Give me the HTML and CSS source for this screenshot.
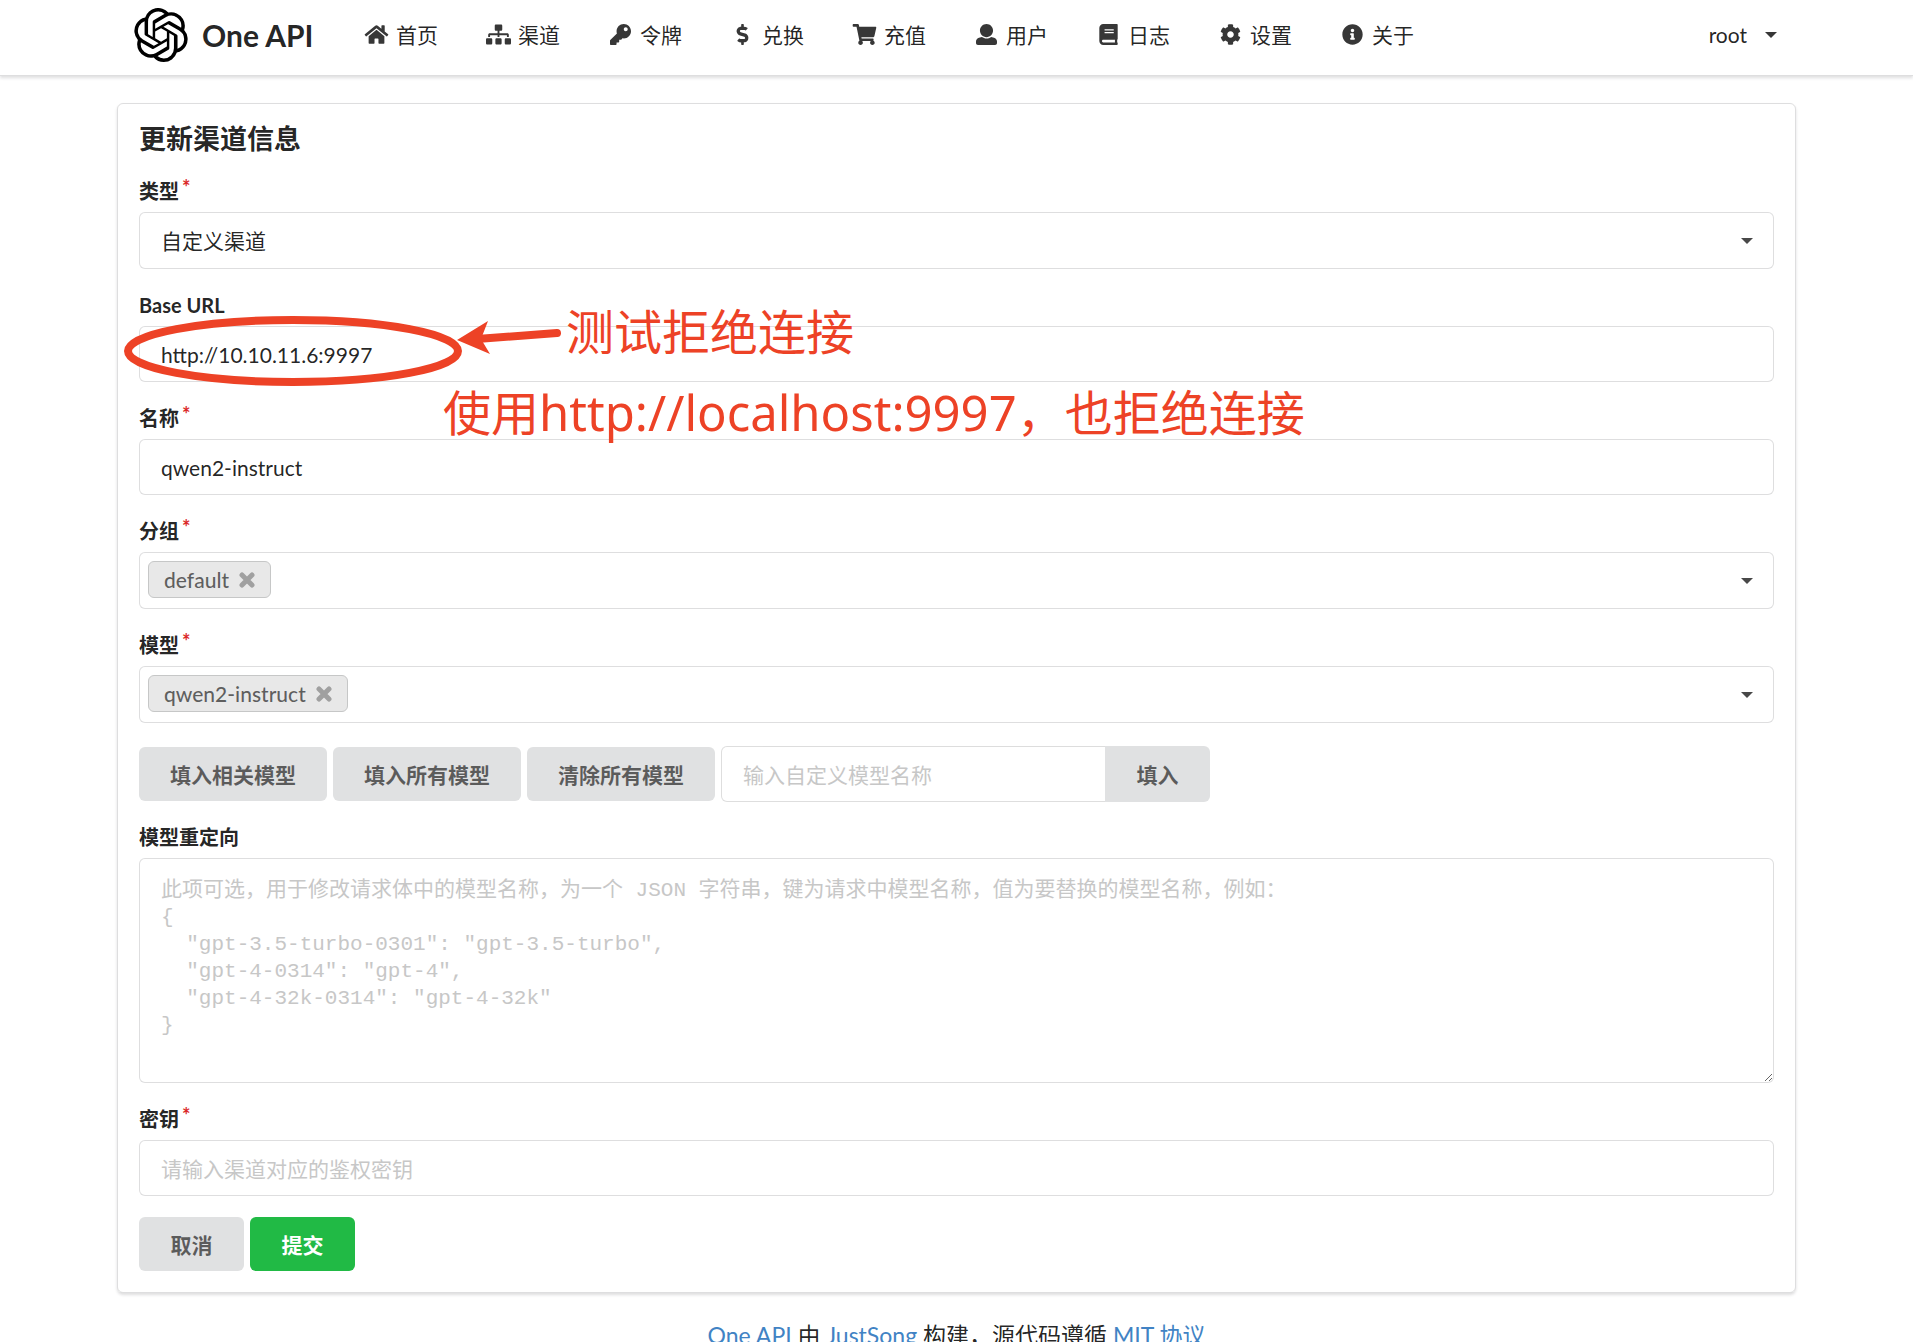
FILE: index.html
```html
<!DOCTYPE html>
<html lang="zh-CN">
<head>
    <meta charset="utf-8">
    <meta name="viewport" content="width=device-width, initial-scale=1">
    <title>One API</title>
    <link rel="stylesheet" href="styles.css">
</head>
<body>
    <header class="navbar">
        <nav class="container navbar-inner">
            <a class="brand" href="/">
                <svg class="logo" viewBox="0 0 24 24"><path d="M22.2819 9.8211a5.9847 5.9847 0 0 0-.5157-4.9108 6.0462 6.0462 0 0 0-6.5098-2.9A6.0651 6.0651 0 0 0 4.9807 4.1818a5.9847 5.9847 0 0 0-3.9977 2.9 6.0462 6.0462 0 0 0 .7427 7.0966 5.98 5.98 0 0 0 .511 4.9107 6.051 6.051 0 0 0 6.5146 2.9001A5.9847 5.9847 0 0 0 13.2599 24a6.0557 6.0557 0 0 0 5.7718-4.2058 5.9894 5.9894 0 0 0 3.9977-2.9001 6.0557 6.0557 0 0 0-.7475-7.0729zm-9.022 12.6081a4.4755 4.4755 0 0 1-2.8764-1.0408l.1419-.0804 4.7783-2.7582a.7948.7948 0 0 0 .3927-.6813v-6.7369l2.02 1.1686a.071.071 0 0 1 .038.052v5.5826a4.504 4.504 0 0 1-4.4945 4.4944zm-9.6607-4.1254a4.4708 4.4708 0 0 1-.5346-3.0137l.142.0852 4.783 2.7582a.7712.7712 0 0 0 .7806 0l5.8428-3.3685v2.3324a.0804.0804 0 0 1-.0332.0615L9.74 19.9502a4.4992 4.4992 0 0 1-6.1408-1.6464zM2.3408 7.8956a4.485 4.485 0 0 1 2.3655-1.9728V11.6a.7664.7664 0 0 0 .3879.6765l5.8144 3.3543-2.0201 1.1685a.0757.0757 0 0 1-.071 0l-4.8303-2.7865A4.504 4.504 0 0 1 2.3408 7.872zm16.5963 3.8558L13.1038 8.364 15.1192 7.2a.0757.0757 0 0 1 .071 0l4.8303 2.7913a4.4944 4.4944 0 0 1-.6765 8.1042v-5.6772a.79.79 0 0 0-.407-.667zm2.0107-3.0231l-.142-.0852-4.7735-2.7818a.7759.7759 0 0 0-.7854 0L9.409 9.2297V6.8974a.0662.0662 0 0 1 .0284-.0615l4.8303-2.7866a4.4992 4.4992 0 0 1 6.6802 4.66zM8.3065 12.863l-2.02-1.1638a.0804.0804 0 0 1-.038-.0567V6.0742a4.4992 4.4992 0 0 1 7.3757-3.4537l-.142.0805L8.704 5.459a.7948.7948 0 0 0-.3927.6813zm1.0976-2.3654l2.602-1.4998 2.6069 1.4998v2.9994l-2.5974 1.4997-2.6067-1.4997Z"/></svg>
                <span class="brand-name">One API</span>
            </a>
            <a class="nav-item" href="/">
                <svg class="icon" viewBox="0 0 576 512"><path d="M280.37 148.26L96 300.11V464a16 16 0 0 0 16 16l112.06-.29a16 16 0 0 0 15.92-16V368a16 16 0 0 1 16-16h64a16 16 0 0 1 16 16v95.64a16 16 0 0 0 16 16.05L464 480a16 16 0 0 0 16-16V300L295.67 148.26a12.19 12.19 0 0 0-15.3 0zM571.6 251.47L488 182.56V44.05a12 12 0 0 0-12-12h-56a12 12 0 0 0-12 12v72.61L318.47 43a48 48 0 0 0-61 0L4.34 251.47a12 12 0 0 0-1.6 16.9l25.5 31A12 12 0 0 0 45.15 301l235.22-193.74a12.19 12.19 0 0 1 15.3 0L530.9 301a12 12 0 0 0 16.9-1.6l25.5-31a12 12 0 0 0-1.7-16.93z"/></svg>
                <span>首页</span>
            </a>
            <a class="nav-item" href="/channel">
                <svg class="icon" viewBox="0 0 640 512"><path d="M128 352H32c-17.67 0-32 14.33-32 32v96c0 17.67 14.33 32 32 32h96c17.67 0 32-14.33 32-32v-96c0-17.67-14.33-32-32-32zm-24-80h192v48h48v-48h192v48h48v-57.59c0-21.17-17.23-38.41-38.41-38.41H344v-64h40c17.67 0 32-14.33 32-32V32c0-17.67-14.33-32-32-32H256c-17.67 0-32 14.33-32 32v96c0 17.67 14.33 32 32 32h40v64H94.41C73.23 224 56 241.23 56 262.41V320h48v-48zm264 80h-96c-17.67 0-32 14.33-32 32v96c0 17.67 14.33 32 32 32h96c17.67 0 32-14.33 32-32v-96c0-17.67-14.33-32-32-32zm240 0h-96c-17.67 0-32 14.33-32 32v96c0 17.67 14.33 32 32 32h96c17.67 0 32-14.33 32-32v-96c0-17.67-14.33-32-32-32z"/></svg>
                <span>渠道</span>
            </a>
            <a class="nav-item" href="/token">
                <svg class="icon" viewBox="0 0 512 512"><path d="M512 176.001C512 273.203 433.202 352 336 352c-11.22 0-22.19-1.062-32.827-3.069l-24.012 27.014A23.999 23.999 0 0 1 261.223 384H224v40c0 13.255-10.745 24-24 24h-40v40c0 13.255-10.745 24-24 24H24c-13.255 0-24-10.745-24-24v-78.059c0-6.365 2.529-12.47 7.029-16.971l161.802-161.802C163.108 213.814 160 195.271 160 176 160 78.798 238.797.001 335.999 0 433.488-.001 512 78.511 512 176.001zM336 128c0 26.51 21.49 48 48 48s48-21.49 48-48-21.49-48-48-48-48 21.49-48 48z"/></svg>
                <span>令牌</span>
            </a>
            <a class="nav-item" href="/redemption">
                <svg class="icon" viewBox="0 0 288 512"><path d="M209.2 233.4l-108-31.6C88.7 198.2 80 186.5 80 173.5c0-16.3 13.2-29.5 29.5-29.5h66.3c12.2 0 24.2 3.7 34.2 10.5 6.1 4.1 14.3 3.1 19.5-2l34.8-34c7.1-6.9 6.1-18.4-1.8-24.5C238 74.8 207.4 64.1 176 64V16c0-8.8-7.2-16-16-16h-32c-8.8 0-16 7.2-16 16v48h-2.5C45.8 64-5.4 118.7.5 183.6c4.2 46.1 39.4 83.6 83.8 96.6l102.5 30c12.5 3.7 21.2 15.3 21.2 28.3 0 16.3-13.2 29.5-29.5 29.5h-66.3C100 368 88 364.3 78 357.5c-6.1-4.1-14.3-3.1-19.5 2l-34.8 34c-7.1 6.9-6.1 18.4 1.8 24.5 24.5 19.2 55.1 29.9 86.5 30v48c0 8.8 7.2 16 16 16h32c8.8 0 16-7.2 16-16v-48.2c46.6-.9 90.3-28.6 105.7-72.7 21.5-61.6-14.6-124.8-72.5-141.7z"/></svg>
                <span>兑换</span>
            </a>
            <a class="nav-item" href="/topup">
                <svg class="icon" viewBox="0 0 576 512"><path d="M528.12 301.319l47.273-208C578.806 78.301 567.391 64 551.99 64H159.208l-9.166-44.81C147.758 8.021 137.93 0 126.529 0H24C10.745 0 0 10.745 0 24v16c0 13.255 10.745 24 24 24h69.883l70.248 343.435C147.325 417.1 136 435.222 136 456c0 30.928 25.072 56 56 56s56-25.072 56-56c0-15.674-6.447-29.835-16.824-40h209.647C430.447 426.165 424 440.326 424 456c0 30.928 25.072 56 56 56s56-25.072 56-56c0-22.172-12.888-41.332-31.579-50.405l5.517-24.276c3.413-15.018-8.002-29.319-23.403-29.319H218.117l-6.545-32h293.145c11.206 0 20.92-7.754 23.403-18.681z"/></svg>
                <span>充值</span>
            </a>
            <a class="nav-item" href="/user">
                <svg class="icon" viewBox="0 0 512 512"><path d="M256 0c88.366 0 160 71.634 160 160s-71.634 160-160 160S96 248.366 96 160 167.634 0 256 0zm183.283 333.821l-71.313-17.828c-74.923 53.89-165.738 41.864-223.94 0l-71.313 17.828C29.981 344.505 0 382.903 0 426.955V464c0 26.51 21.49 48 48 48h416c26.51 0 48-21.49 48-48v-37.045c0-44.052-29.981-82.45-72.717-93.134z"/></svg>
                <span>用户</span>
            </a>
            <a class="nav-item" href="/log">
                <svg class="icon" viewBox="0 0 448 512"><path d="M448 360V24c0-13.3-10.7-24-24-24H96C43 0 0 43 0 96v320c0 53 43 96 96 96h328c13.3 0 24-10.7 24-24v-16c0-7.5-3.5-14.3-8.9-18.7-4.2-15.4-4.2-59.3 0-74.7 5.4-4.3 8.9-11.1 8.9-18.6zM128 134c0-3.3 2.7-6 6-6h212c3.3 0 6 2.7 6 6v20c0 3.3-2.7 6-6 6H134c-3.3 0-6-2.7-6-6v-20zm0 64c0-3.3 2.7-6 6-6h212c3.3 0 6 2.7 6 6v20c0 3.3-2.7 6-6 6H134c-3.3 0-6-2.7-6-6v-20zm253.4 250H96c-17.7 0-32-14.3-32-32 0-17.6 14.4-32 32-32h285.4c-1.9 17.1-1.9 46.9 0 64z"/></svg>
                <span>日志</span>
            </a>
            <a class="nav-item" href="/setting">
                <svg class="icon" viewBox="0 0 512 512"><path d="M444.788 291.1l42.616 24.599c4.867 2.809 7.126 8.618 5.459 13.985-11.07 35.642-29.97 67.842-54.689 94.586a12.016 12.016 0 0 1-14.832 2.254l-42.584-24.595a191.577 191.577 0 0 1-60.759 35.13v49.182a12.01 12.01 0 0 1-9.377 11.718c-34.956 7.85-72.499 8.256-109.219.007-5.49-1.233-9.403-6.096-9.403-11.723v-49.184a191.555 191.555 0 0 1-60.759-35.13l-42.584 24.595a12.016 12.016 0 0 1-14.832-2.254c-24.718-26.744-43.619-58.944-54.689-94.586-1.667-5.366.592-11.175 5.459-13.985L67.212 291.1a193.48 193.48 0 0 1 0-70.199l-42.616-24.599c-4.867-2.809-7.126-8.618-5.459-13.985 11.07-35.642 29.97-67.842 54.689-94.586a12.016 12.016 0 0 1 14.832-2.254l42.584 24.595a191.577 191.577 0 0 1 60.759-35.13V25.759a12.01 12.01 0 0 1 9.377-11.718c34.956-7.85 72.499-8.256 109.219-.007 5.49 1.233 9.403 6.096 9.403 11.723v49.184a191.555 191.555 0 0 1 60.759 35.13l42.584-24.595a12.016 12.016 0 0 1 14.832 2.254c24.718 26.744 43.619 58.944 54.689 94.586 1.667 5.366-.592 11.175-5.459 13.985L444.788 220.9a193.485 193.485 0 0 1 0 70.2zM336 256c0-44.112-35.888-80-80-80s-80 35.888-80 80 35.888 80 80 80 80-35.888 80-80z"/></svg>
                <span>设置</span>
            </a>
            <a class="nav-item" href="/about">
                <svg class="icon" viewBox="0 0 512 512"><path d="M256 8C119.043 8 8 119.083 8 256c0 136.997 111.043 248 248 248s248-111.003 248-248C504 119.083 392.957 8 256 8zm0 110c23.196 0 42 18.804 42 42s-18.804 42-42 42-42-18.804-42-42 18.804-42 42-42zm56 254c0 6.627-5.373 12-12 12h-88c-6.627 0-12-5.373-12-12v-24c0-6.627 5.373-12 12-12h12v-64h-12c-6.627 0-12-5.373-12-12v-24c0-6.627 5.373-12 12-12h64c6.627 0 12 5.373 12 12v100h12c6.627 0 12 5.373 12 12v24z"/></svg>
                <span>关于</span>
            </a>
            <button class="user-menu" type="button">root</button>
        </nav>
    </header>

    <main class="container segment">
        <h3>更新渠道信息</h3>
        <form>
            <div class="field required">
                <label for="type">类型</label>
                <div class="dropdown">
                    <select id="type">
                        <option>自定义渠道</option>
                    </select>
                </div>
            </div>
            <div class="field">
                <label for="base-url">Base URL</label>
                <input id="base-url" type="text" value="http://10.10.11.6:9997">
            </div>
            <div class="field required">
                <label for="name">名称</label>
                <input id="name" type="text" value="qwen2-instruct">
            </div>
            <div class="field required">
                <label id="groups-label">分组</label>
                <div class="dropdown multiple" role="listbox" aria-labelledby="groups-label">
                    <span class="tag">default
                        <button type="button" aria-label="删除"><svg viewBox="0 0 16 16"><path d="M3 3l10 10M13 3L3 13"/></svg></button>
                    </span>
                </div>
            </div>
            <div class="field required">
                <label id="models-label">模型</label>
                <div class="dropdown multiple" role="listbox" aria-labelledby="models-label">
                    <span class="tag">qwen2-instruct
                        <button type="button" aria-label="删除"><svg viewBox="0 0 16 16"><path d="M3 3l10 10M13 3L3 13"/></svg></button>
                    </span>
                </div>
            </div>
            <div class="model-actions">
                <button class="btn" type="button">填入相关模型</button>
                <button class="btn" type="button">填入所有模型</button>
                <button class="btn" type="button">清除所有模型</button>
                <div class="action-input">
                    <input type="text" placeholder="输入自定义模型名称" aria-label="自定义模型名称">
                    <button class="btn" type="button">填入</button>
                </div>
            </div>
            <div class="field">
                <label for="mapping">模型重定向</label>
                <textarea id="mapping" placeholder='此项可选，用于修改请求体中的模型名称，为一个 JSON 字符串，键为请求中模型名称，值为要替换的模型名称，例如：
{
  "gpt-3.5-turbo-0301": "gpt-3.5-turbo",
  "gpt-4-0314": "gpt-4",
  "gpt-4-32k-0314": "gpt-4-32k"
}'></textarea>
            </div>
            <div class="field required">
                <label for="key">密钥</label>
                <input id="key" type="text" placeholder="请输入渠道对应的鉴权密钥">
            </div>
            <div class="form-actions">
                <button class="btn" type="button">取消</button>
                <button class="btn positive" type="submit">提交</button>
            </div>
        </form>

        <!-- hand-drawn remarks over the form -->
        <svg class="marker" width="460" height="90" viewBox="0 0 460 90">
            <ellipse cx="178" cy="48" rx="165" ry="31"/>
            <path class="shaft" d="M362 36L442 30"/>
            <path class="head" d="M342 37L373 18L366 36L375 51Z"/>
        </svg>
        <span class="remark remark-refused">测试拒绝连接</span>
        <span class="remark remark-localhost">使用<span class="remark-url">http://localhost:9997</span>，也拒绝连接</span>
    </main>

    <footer class="footer">
        <a href="https://github.com/songquanpeng/one-api">One API</a> 由 <a href="https://github.com/songquanpeng">JustSong</a> 构建，源代码遵循 <a href="https://opensource.org/licenses/mit-license.php">MIT 协议</a>
    </footer>
</body>
</html>
```
FILE: styles.css
```css
* {
    box-sizing: border-box;
}
body {
    margin: 0;
    font-family: Lato, "Noto Sans CJK SC", sans-serif;
    font-size: 21px;
    line-height: 27px;
    color: rgba(0, 0, 0, 0.87);
    background: #fff;
}
a {
    color: #4183c4;
    text-decoration: none;
}
button, input, select, textarea {
    font: inherit;
    color: inherit;
}
.container {
    max-width: 1679px;
    margin: 0 auto;
}

/* top menu */
.navbar {
    border-bottom: 1px solid rgba(34, 36, 38, 0.15);
    box-shadow: 0 2px 3px rgba(34, 36, 38, 0.15);
}
.navbar-inner {
    display: flex;
    align-items: center;
    height: 75px;
    padding: 0 19px 6px 17px;
}
.brand {
    display: flex;
    align-items: center;
    gap: 14px;
    width: 206px;
    color: rgba(0, 0, 0, 0.87);
}
.logo {
    width: 54px;
    height: 54px;
    fill: #000;
}
.brand-name {
    font-size: 30px;
    font-weight: bold;
    line-height: 36px;
}
.nav-item {
    display: flex;
    align-items: center;
    gap: 7px;
    padding: 0 24px;
    white-space: nowrap;
    color: rgba(0, 0, 0, 0.87);
}
.icon {
    width: 25px;
    height: 21px;
    fill: #373737;
}
.user-menu {
    display: flex;
    align-items: center;
    gap: 18px;
    margin-left: auto;
    padding: 0;
    border: none;
    background: none;
}
.user-menu::after {
    content: "";
    border: 6px solid transparent;
    border-top-color: #373737;
    border-bottom: none;
}

/* form segment */
.segment {
    position: relative;
    margin-top: 27px;
    padding: 18px 21px 21px;
    border: 1px solid rgba(34, 36, 38, 0.15);
    border-radius: 6px;
    box-shadow: 0 2px 3px rgba(34, 36, 38, 0.15);
}
h3 {
    margin: 0 0 20px;
    font-size: 27px;
    line-height: 34px;
}
.field {
    margin-bottom: 21px;
}
.field label {
    display: block;
    margin-bottom: 6px;
    font-size: 20px;
    font-weight: bold;
    line-height: 30px;
}
.required label::after {
    content: "*";
    margin-left: 3px;
    color: #db2828;
    vertical-align: 4px;
    line-height: 1;
}
input, select, textarea, .multiple {
    display: block;
    width: 100%;
    height: 56px;
    padding: 0 21px;
    border: 1px solid rgba(34, 36, 38, 0.15);
    border-radius: 6px;
    background: #fff;
    outline: none;
}
select {
    appearance: none;
}
select, .multiple {
    height: 57px;
}
textarea {
    height: 225px;
    padding: 18px 21px;
    font-family: "Liberation Mono", "Noto Sans CJK SC", monospace;
    resize: vertical;
}
::placeholder {
    color: #c7c7c7;
}
.dropdown {
    position: relative;
}
.dropdown::after {
    content: "";
    position: absolute;
    top: 26px;
    right: 21px;
    border: 6px solid transparent;
    border-top-color: #484848;
    border-bottom: none;
}
.multiple {
    padding: 8px;
}
.multiple::after {
    top: 25px;
    right: 20px;
}
.tag {
    display: inline-flex;
    align-items: center;
    gap: 10px;
    height: 37px;
    padding: 0 15px;
    border: 1px solid #c6c7c7;
    border-radius: 6px;
    background: #e8e8e8;
    color: rgba(0, 0, 0, 0.6);
    font-family: "Lato Medium", Lato, sans-serif;
    font-weight: 500;
}
.tag button {
    display: flex;
    padding: 0;
    border: none;
    background: none;
}
.tag svg {
    width: 16px;
    height: 16px;
    stroke: #a0a0a0;
    stroke-width: 5;
    stroke-linecap: round;
}

/* buttons */
.btn {
    height: 54px;
    min-width: 105px;
    padding: 0 31px;
    border: none;
    border-radius: 6px;
    background: #e0e1e2;
    color: rgba(0, 0, 0, 0.6);
    font-weight: bold;
    cursor: pointer;
}
.positive {
    background: #21ba45;
    color: #fff;
}
.model-actions, .form-actions {
    display: flex;
    align-items: center;
    gap: 6px;
}
.model-actions {
    margin: 23px 0 20px;
}
.action-input {
    display: flex;
}
.action-input input {
    width: 384px;
    border-right: none;
    border-radius: 6px 0 0 6px;
}
.action-input .btn {
    height: 56px;
    border-radius: 0 6px 6px 0;
}

/* red remarks */
.marker {
    position: absolute;
    top: 199px;
    left: -3px;
    fill: none;
    stroke: #ed4226;
    stroke-width: 8;
    pointer-events: none;
}
.shaft {
    stroke-linecap: round;
}
.head {
    fill: #ed4226;
    stroke: none;
}
.remark {
    position: absolute;
    color: #ed4226;
    font-family: "Noto Sans", "Noto Sans CJK SC", sans-serif;
    font-size: 48px;
    line-height: 60px;
    white-space: nowrap;
    pointer-events: none;
}
.remark-refused {
    top: 198px;
    left: 448px;
}
.remark-localhost {
    top: 278px;
    left: 325px;
}
.remark-url {
    font-size: 49px;
}

.footer {
    padding: 27px 0;
    font-size: 23px;
    line-height: 30px;
    text-align: center;
}
```
